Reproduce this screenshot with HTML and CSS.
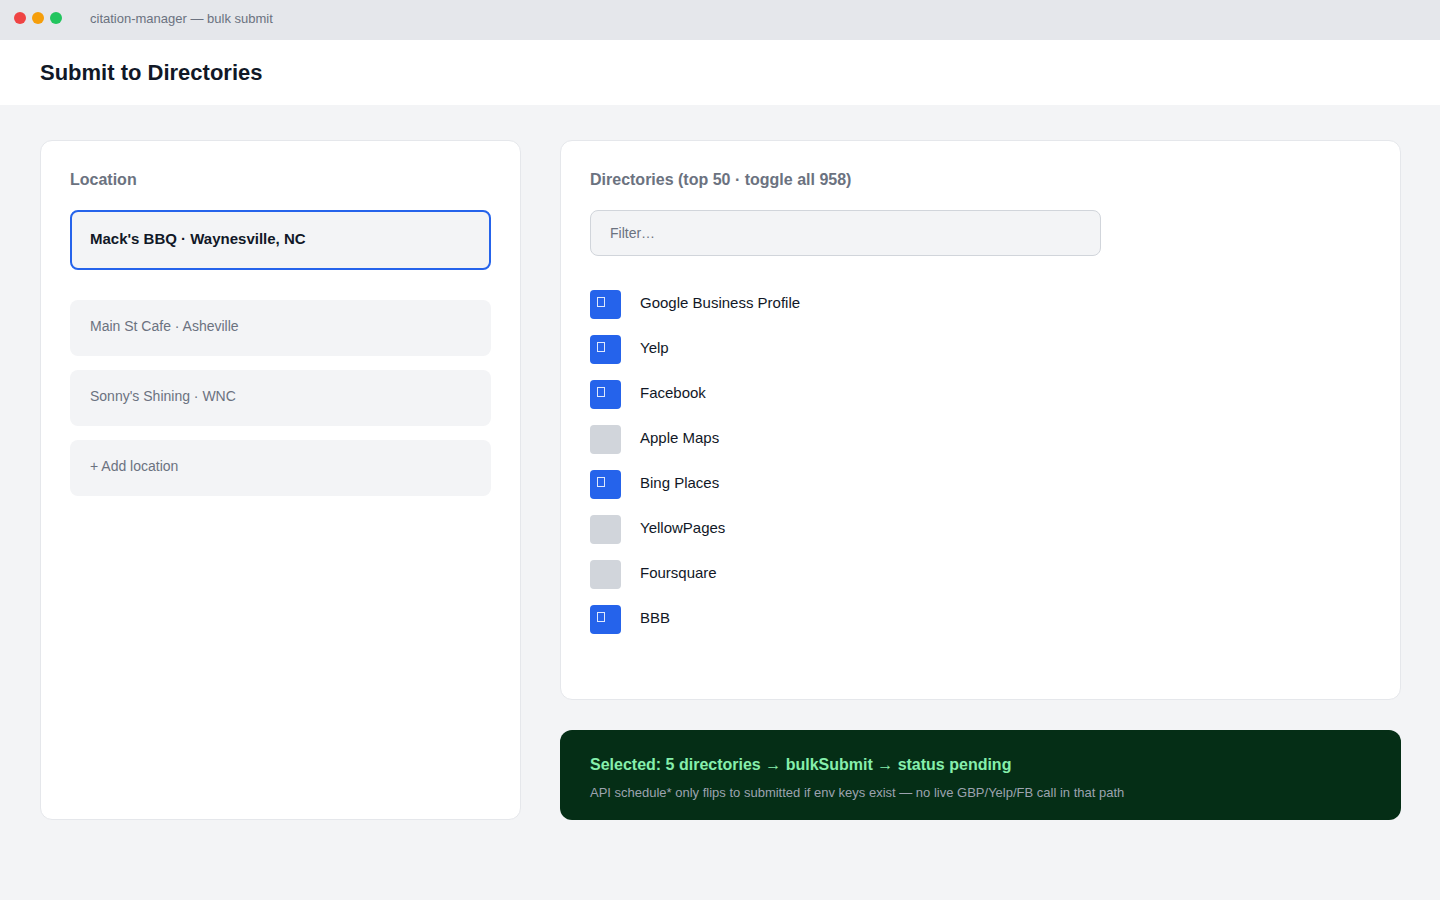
FILE: index.html
```html
<!DOCTYPE html>
<html lang="en">
<head>
<meta charset="utf-8">
<title>citation-manager — bulk submit</title>
<link rel="stylesheet" href="styles.css">
</head>
<body>
<div class="titlebar">
  <div class="lights">
    <span class="light red"></span>
    <span class="light amber"></span>
    <span class="light green"></span>
  </div>
  <div class="wintitle">citation-manager — bulk submit</div>
</div>
<header class="header">
  <h1>Submit to Directories</h1>
</header>
<main class="main">
  <section class="card loc-card">
    <h2 class="label">Location</h2>
    <div class="loc selected">Mack's BBQ · Waynesville, NC</div>
    <div class="loc-list">
      <div class="loc">Main St Cafe · Asheville</div>
      <div class="loc">Sonny's Shining · WNC</div>
      <div class="loc">+ Add location</div>
    </div>
  </section>
  <div class="right">
    <section class="card dir-card">
      <h2 class="label">Directories (top 50 · toggle all 958)</h2>
      <input class="filter" type="text" placeholder="Filter…">
      <ul class="dirs">
        <li class="dir"><span class="cb on"><span class="tofu"></span></span><span class="name">Google Business Profile</span></li>
        <li class="dir"><span class="cb on"><span class="tofu"></span></span><span class="name">Yelp</span></li>
        <li class="dir"><span class="cb on"><span class="tofu"></span></span><span class="name">Facebook</span></li>
        <li class="dir"><span class="cb"></span><span class="name">Apple Maps</span></li>
        <li class="dir"><span class="cb on"><span class="tofu"></span></span><span class="name">Bing Places</span></li>
        <li class="dir"><span class="cb"></span><span class="name">YellowPages</span></li>
        <li class="dir"><span class="cb"></span><span class="name">Foursquare</span></li>
        <li class="dir"><span class="cb on"><span class="tofu"></span></span><span class="name">BBB</span></li>
      </ul>
    </section>
    <section class="status">
      <div class="status-title">Selected: 5 directories → bulkSubmit → status pending</div>
      <div class="status-note">API schedule* only flips to submitted if env keys exist — no live GBP/Yelp/FB call in that path</div>
    </section>
  </div>
</main>
</body>
</html>
```

FILE: styles.css
```css
* { box-sizing: border-box; }
html, body { margin: 0; padding: 0; }
body {
  font-family: "Liberation Sans", Arial, sans-serif;
  background: #f3f4f6;
  color: #111827;
  width: 1440px;
  min-height: 900px;
}
.titlebar {
  height: 40px;
  background: #e5e7eb;
  display: flex;
  align-items: center;
  padding-left: 14px;
}
.lights { display: flex; gap: 6px; margin-top: -4px; }
.light { width: 12px; height: 12px; border-radius: 50%; display: block; }
.red { background: #ef4444; }
.amber { background: #f59e0b; }
.green { background: #22c55e; }
.wintitle {
  margin-left: 28px;
  margin-top: -4px;
  font-size: 13px;
  color: #6b7280;
}
.header {
  height: 65px;
  background: #fff;
  display: flex;
  align-items: center;
  padding: 0 40px;
}
.header h1 {
  margin: 0;
  font-size: 22px;
  font-weight: 700;
  color: #111827;
}
.main {
  display: grid;
  grid-template-columns: 481px 841px;
  gap: 39px;
  padding: 35px 39px 35px 40px;
}
.card {
  background: #fff;
  border: 1px solid #e5e7eb;
  border-radius: 12px;
}
.label {
  margin: 0 0 20px;
  font-size: 16px;
  line-height: 20px;
  font-weight: 700;
  color: #6b7280;
}
.loc-card { padding: 29px 29px; }
.loc {
  height: 56px;
  border-radius: 8px;
  background: #f3f4f6;
  display: flex;
  align-items: center;
  padding: 0 20px 4px;
  font-size: 14px;
  color: #6b7280;
}
.loc.selected {
  height: 60px;
  border: 2px solid #2563eb;
  padding: 0 18px 4px;
  font-size: 15px;
  font-weight: 700;
  color: #111827;
  margin-bottom: 30px;
}
.loc-list { display: flex; flex-direction: column; gap: 14px; }
.right { display: flex; flex-direction: column; gap: 30px; }
.dir-card { padding: 29px 29px 65px; }
.filter {
  display: block;
  width: 511px;
  height: 46px;
  border: 1px solid #d1d5db;
  border-radius: 8px;
  background: #f3f4f6;
  padding: 0 19px;
  font-family: "Liberation Sans", Arial, sans-serif;
  font-size: 14px;
  color: #111827;
  outline: none;
}
.filter::placeholder { color: #6b7280; }
.dirs {
  list-style: none;
  margin: 34px 0 0;
  padding: 0;
  display: flex;
  flex-direction: column;
  gap: 16px;
}
.dir {
  display: flex;
  align-items: center;
  gap: 19px;
  font-size: 15px;
  color: #111827;
  height: 29px;
}
.name { margin-bottom: 4px; }
.cb {
  width: 31px;
  height: 29px;
  border-radius: 4px;
  background: #d1d5db;
  padding: 7px 0 0 7px;
  flex: none;
}
.cb.on { background: #2563eb; }
.tofu {
  display: block;
  width: 8px;
  height: 10px;
  border: 1px solid rgba(255,255,255,0.85);
}
.status {
  background: #052e16;
  border-radius: 12px;
  height: 90px;
  padding: 26px 30px 0;
}
.status-title {
  font-size: 16px;
  line-height: 18px;
  font-weight: 700;
  color: #86efac;
}
.status-note {
  margin-top: 11px;
  font-size: 13px;
  color: #9ca3af;
}
```
